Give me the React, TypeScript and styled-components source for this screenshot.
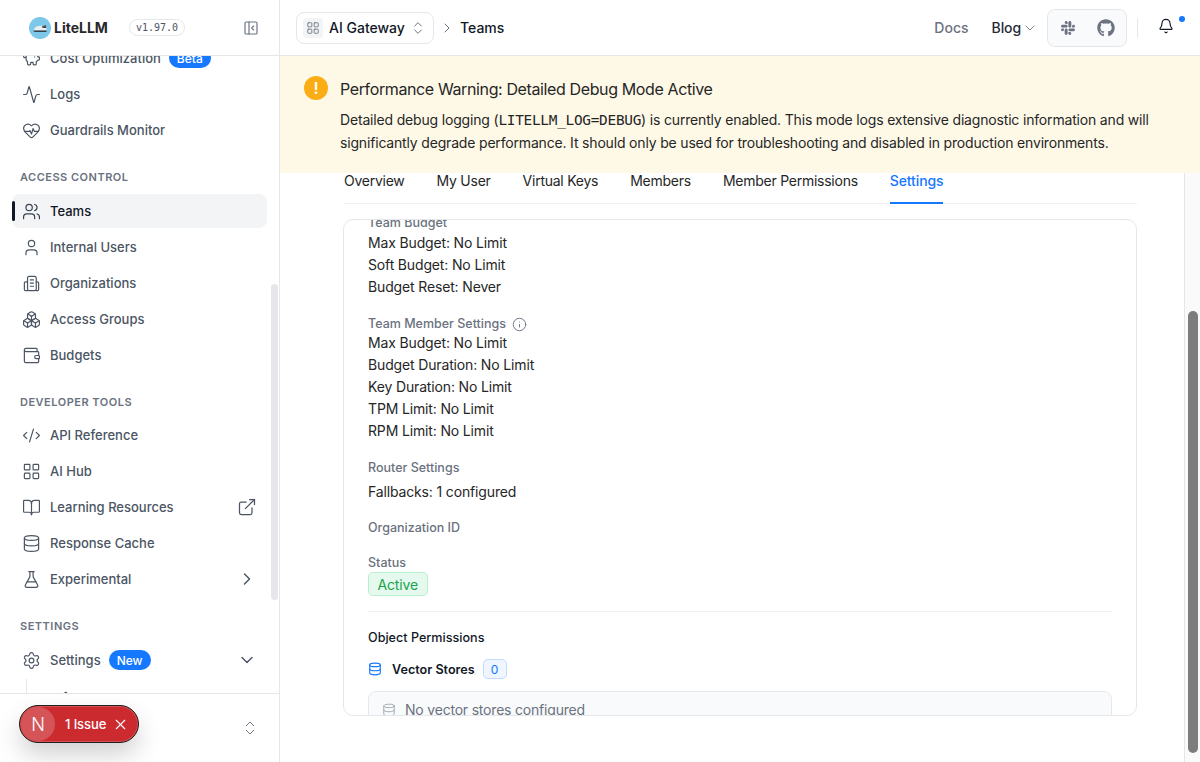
import React from "react";
import styled, { createGlobalStyle } from "styled-components";
import {
  Activity, HeartPulse, Users, User, Boxes, Wallet, CodeXml, LayoutGrid, BookOpen, ExternalLink,
  Database, FlaskConical, ChevronRight, ChevronDown, ChevronsUpDown, Settings, PanelLeftClose, Info, Bell, X, Megaphone, PiggyBank,
} from "lucide-react";
import { FaGithub, FaSlack } from "react-icons/fa";

const Global = createGlobalStyle`
  html, body { margin: 0; padding: 0; height: 100%; overflow: hidden; }
  body { font-family: Inter, "Liberation Sans", sans-serif; color: #111827; background: #fff; -webkit-font-smoothing: antialiased; }
  * { box-sizing: border-box; }
`;

const Shell = styled.div`
  display: flex;
  width: 1200px;
  height: 762px;
  overflow: hidden;
  position: relative;
`;
const Sidebar = styled.aside`
  width: 280px;
  flex: none;
  display: flex;
  flex-direction: column;
  border-right: 1px solid #e5e7eb;
  position: relative;
`;
const SideHead = styled.div`
  height: 56px;
  flex: none;
  display: flex;
  align-items: center;
  padding: 0 20px 0 29px;
  border-bottom: 1px solid #e5e7eb;
`;
const LogoMark = styled.svg`
  width: 22px;
  height: 22px;
  flex: none;
`;
const LogoText = styled.span`
  font-size: 14px;
  font-weight: 700;
  color: #27272a;
  margin-left: 3px;
  width: 75px;
`;
const Version = styled.span`
  font-family: "DejaVu Sans Mono", "Liberation Mono", monospace;
  font-size: 10px;
  color: #4b5563;
  border: 1px solid #e5e7eb;
  border-radius: 9px;
  height: 17px;
  width: 56px;
  display: flex;
  align-items: center;
  justify-content: center;
`;
const Collapse = styled.span`
  margin-left: auto;
  color: #6b7280;
  display: flex;
`;
const NavClip = styled.nav`
  flex: 1;
  overflow: hidden;
  position: relative;
`;
const NavInner = styled.div`
  margin-top: -15px;
  padding: 0 12px;
  display: flex;
  flex-direction: column;
`;
const Row = styled.div<{ $active?: boolean }>`
  height: 34px;
  margin-bottom: 2px;
  flex: none;
  display: flex;
  align-items: center;
  padding: 0 10px 0 9.5px;
  border-radius: 8px;
  font-size: 13px;
  font-weight: 500;
  color: ${(p) => (p.$active ? "#111827" : "#4b5563")};
  background: ${(p) => (p.$active ? "#f3f4f6" : "transparent")};
  position: relative;
  svg.lead { flex: none; margin-right: 9.5px; color: ${(p) => (p.$active ? "#374151" : "#4b5563")}; }
`;
const ActiveBar = styled.span`
  position: absolute;
  left: 0;
  top: 7px;
  width: 3px;
  height: 20px;
  background: #111827;
  border-radius: 2px;
`;
const RowEnd = styled.span`
  margin-left: auto;
  display: flex;
  color: #4b5563;
`;
const Pill = styled.span`
  margin-left: 8px;
  height: 20px;
  padding: 0 8px;
  border-radius: 10px;
  background: #1677ff;
  color: #fff;
  font-size: 12px;
  font-weight: 500;
  display: flex;
  align-items: center;
`;
const SectionLabel = styled.div<{ $mb: number }>`
  height: 16px;
  margin: 20px 0 ${(p) => p.$mb}px 8px;
  font-size: 11px;
  line-height: 16px;
  font-weight: 600;
  letter-spacing: 0.5px;
  color: #6b7280;
`;
const SubTree = styled.div`
  margin-left: 14px;
  border-left: 1px solid #e5e7eb;
  padding: 11px 0 0 24px;
  height: 30px;
  color: #4b5563;
`;
const SideThumb = styled.div`
  position: absolute;
  right: 1px;
  top: 228px;
  width: 7px;
  height: 316px;
  border-radius: 4px;
  background: #e5e7eb;
`;
const SideFoot = styled.div`
  height: 69px;
  flex: none;
  border-top: 1px solid #e5e7eb;
  display: flex;
  align-items: center;
  justify-content: flex-end;
  padding: 0 20px 0 0;
  color: #6b7280;
`;
const Issue = styled.div`
  position: absolute;
  left: 19px;
  top: 705px;
  width: 120px;
  height: 38px;
  border-radius: 19px;
  background: #cb2a2f;
  border: 1px solid #1f1f1f;
  box-shadow: inset 0 0 0 1px rgba(255,255,255,.18), 0 12px 24px rgba(0,0,0,.18);
  display: flex;
  align-items: center;
  color: #fff;
  font-size: 13px;
  font-weight: 500;
  letter-spacing: -0.1px;
`;
const IssueN = styled.span`
  width: 34px;
  height: 34px;
  margin-left: 1px;
  border-radius: 50%;
  background: rgba(255,255,255,.2);
  display: flex;
  align-items: center;
  justify-content: center;
  font-size: 18px;
  font-weight: 300;
  margin-right: 10px;
`;
const IssueX = styled.span`
  display: flex;
  margin-left: 6px;
`;
const Main = styled.main`
  flex: 1;
  min-width: 0;
  display: flex;
  flex-direction: column;
`;
const Top = styled.header`
  height: 56px;
  flex: none;
  border-bottom: 1px solid #e5e7eb;
  display: flex;
  align-items: center;
  padding: 0 16px;
`;
const Switcher = styled.div`
  width: 138px;
  height: 32px;
  border: 1px solid #e5e7eb;
  border-radius: 8px;
  display: flex;
  align-items: center;
  padding: 0 7px 0 6px;
  font-size: 14px;
  font-weight: 500;
  color: #111827;
`;
const SwitchIcon = styled.span`
  width: 20px;
  height: 20px;
  background: #f3f4f6;
  border-radius: 4px;
  display: flex;
  align-items: center;
  justify-content: center;
  color: #6b7280;
  margin-right: 6px;
`;
const SwitchChev = styled.span`
  margin-left: auto;
  display: flex;
  color: #6b7280;
`;
const Crumb = styled.span`
  display: flex;
  color: #6b7280;
  margin: 0 5px;
`;
const CrumbNow = styled.span`
  font-size: 14px;
  font-weight: 500;
  color: #111827;
`;
const TopRight = styled.div`
  margin-left: auto;
  display: flex;
  align-items: center;
`;
const DocsLink = styled.span`
  font-size: 14px;
  font-weight: 500;
  color: #6b7280;
  margin-right: 23px;
`;
const BlogLink = styled.span`
  font-size: 14px;
  font-weight: 500;
  letter-spacing: -0.1px;
  color: #1f2937;
  display: flex;
  align-items: center;
  gap: 1px;
  margin-right: 9px;
  svg { color: #6b7280; }
`;
const Social = styled.div`
  width: 80px;
  height: 38px;
  background: #f9fafb;
  border: 1px solid #e5e7eb;
  border-radius: 8px;
  display: flex;
  align-items: center;
  justify-content: space-between;
  padding: 0 11px 0 12px;
  color: #6b7280;
`;
const Divider = styled.span`
  width: 1px;
  height: 20px;
  background: #e5e7eb;
  margin: 0 20px 0 10px;
`;
const BellWrap = styled.span`
  display: flex;
  position: relative;
  color: #111827;
  margin: -3px 10px 0 0;
`;
const Dot = styled.span`
  position: absolute;
  top: -2px;
  right: -11px;
  width: 6px;
  height: 6px;
  border-radius: 50%;
  background: #1677ff;
`;
const Banner = styled.section`
  height: 117px;
  flex: none;
  background: #fef9e7;
  padding: 20px 24px 0;
  display: grid;
  grid-template-columns: 24px 1fr;
  align-content: start;
  column-gap: 12px;
`;
const WarnIcon = styled.span`
  width: 24px;
  height: 24px;
  border-radius: 50%;
  background: #faad14;
  color: #fff;
  font-size: 16px;
  font-weight: 600;
  display: flex;
  align-items: center;
  justify-content: center;
`;
const BannerTitle = styled.div`
  font-size: 16px;
  line-height: 26px;
  letter-spacing: -0.38px;
  color: #262626;
  margin-bottom: 7px;
`;
const BannerBody = styled.div`
  font-size: 14px;
  line-height: 22.6px;
  letter-spacing: -0.175px;
  color: #262626;
  grid-column: 2;
  code { font-family: "DejaVu Sans Mono", "Liberation Mono", monospace; font-size: 14.4px; letter-spacing: -0.27px; }
`;
const ScrollRow = styled.div`
  flex: 1;
  min-height: 0;
  display: flex;
`;
const Content = styled.div`
  flex: 1;
  padding: 0 47px 0 64px;
  min-width: 0;
  overflow: hidden;
`;
const Tabs = styled.div`
  display: flex;
  gap: 32px;
  height: 31px;
  border-bottom: 1px solid #f0f0f0;
  font-size: 14px;
  line-height: 16px;
  letter-spacing: -0.25px;
  color: #262626;
  margin-bottom: 15px;
`;
const Tab = styled.span<{ $on?: boolean }>`
  height: 31px;
  font-weight: ${(p) => (p.$on ? 500 : 400)};
  letter-spacing: ${(p) => (p.$on ? "-0.12px" : "inherit")};
  color: ${(p) => (p.$on ? "#1677ff" : "#262626")};
  border-bottom: 2px solid ${(p) => (p.$on ? "#1677ff" : "transparent")};
`;
const Card = styled.div`
  height: 497px;
  margin: 0 0 0 -1px;
  border: 1px solid #e5e7eb;
  border-radius: 10px;
  padding: 0 24px;
  overflow: hidden;
`;
const Clip = styled.div`
  margin-top: -5px;
`;
const Label = styled.div<{ $mt?: number; $mb?: number }>`
  font-size: 12.5px;
  line-height: 16px;
  font-weight: 500;
  color: #6b7280;
  margin-top: ${(p) => p.$mt ?? 0}px;
  margin-bottom: ${(p) => p.$mb ?? 1}px;
  display: flex;
  align-items: center;
  gap: 6px;
`;
const Line = styled.div`
  font-size: 14px;
  line-height: 22px;
  letter-spacing: -0.15px;
  color: #262626;
`;
const StatusTag = styled.span`
  display: flex;
  width: fit-content;
  align-items: center;
  height: 24px;
  padding: 0 8.5px;
  background: #e6f9ee;
  border: 1px solid #b7eecb;
  border-radius: 5px;
  color: #16a34a;
  font-size: 14px;
  letter-spacing: -0.15px;
`;
const Rule = styled.div`
  height: 1px;
  background: #f0f0f0;
  margin: 15px 0 18px;
`;
const PermTitle = styled.div`
  font-size: 12.6px;
  line-height: 16px;
  font-weight: 500;
  color: #111827;
  margin-bottom: 13px;
`;
const StoreHead = styled.div`
  display: flex;
  align-items: center;
  font-size: 12.6px;
  font-weight: 600;
  color: #111827;
  height: 20px;
  margin-bottom: 12px;
  svg { color: #1677ff; margin-right: 10px; }
`;
const CountChip = styled.span`
  margin-left: 8px;
  width: 24px;
  height: 20px;
  border: 1px solid #bfdbfe;
  background: #eff6ff;
  border-radius: 5px;
  color: #1677ff;
  font-size: 12px;
  font-weight: 400;
  display: flex;
  align-items: center;
  justify-content: center;
`;
const Empty = styled.div`
  height: 60px;
  background: #f9fafb;
  border: 1px solid #e5e7eb;
  border-radius: 8px;
  padding: 9px 13px;
  display: flex;
  align-items: flex-start;
  gap: 9px;
  font-size: 14px;
  line-height: 18px;
  letter-spacing: -0.2px;
  color: #6b7280;
  svg { color: #9ca3af; margin-top: 2px; }
`;
const Track = styled.div`
  width: 16px;
  flex: none;
  position: relative;
  background: #fafafa;
  border-left: 1px solid #e5e5e5;
`;
const Thumb = styled.div`
  position: absolute;
  left: 3px;
  top: 138px;
  width: 10px;
  height: 442px;
  border-radius: 5px;
  background: #7d7d7d;
`;

const IC = { size: 19, strokeWidth: 1.5, className: "lead" };

function Logo() {
  return (
    <LogoMark viewBox="0 0 22 22">
      <circle cx="11" cy="11" r="11" fill="#7cc8ea" />
      <path d="M4 13.5 L7 9.5 L17 8 L17.5 13.5 Z" fill="#e8eef2" />
      <path d="M4 13.5 H17.5 V15 H5.5 Z" fill="#3b3f46" />
      <path d="M13 9 L17 8 L17.3 11 L13.5 11 Z" fill="#4a4f57" />
    </LogoMark>
  );
}

function OrgIcon() {
  return (
    <svg className="lead" width="19" height="19" viewBox="0 0 24 24" fill="none" stroke="currentColor" strokeWidth="1.5" strokeLinecap="round" strokeLinejoin="round">
      <rect x="7" y="3" width="11" height="18" rx="2" />
      <path d="M7 10H4.5A1.5 1.5 0 0 0 3 11.5V19.5A1.5 1.5 0 0 0 4.5 21H7" />
      <path d="M18 10H19.5A1.5 1.5 0 0 1 21 11.5V19.5A1.5 1.5 0 0 1 19.5 21H18" />
      <path d="M10.5 7.5h4M10.5 11.5h4M10.5 15.5h4" />
    </svg>
  );
}

export default function App() {
  return (
    <>
      <Global />
      <Shell>
        <Sidebar>
          <SideHead>
            <Logo />
            <LogoText>LiteLLM</LogoText>
            <Version>v1.97.0</Version>
            <Collapse><PanelLeftClose size={16} strokeWidth={1.75} /></Collapse>
          </SideHead>
          <NavClip>
            <NavInner>
              <Row><PiggyBank {...IC} />Cost Optimization<Pill>Beta</Pill></Row>
              <Row><Activity {...IC} />Logs</Row>
              <Row><HeartPulse {...IC} />Guardrails Monitor</Row>
              <SectionLabel $mb={9}>ACCESS CONTROL</SectionLabel>
              <Row $active><ActiveBar /><Users {...IC} />Teams</Row>
              <Row><User {...IC} />Internal Users</Row>
              <Row><OrgIcon />Organizations</Row>
              <Row><Boxes {...IC} />Access Groups</Row>
              <Row><Wallet {...IC} />Budgets</Row>
              <SectionLabel $mb={8}>DEVELOPER TOOLS</SectionLabel>
              <Row><CodeXml {...IC} />API Reference</Row>
              <Row><LayoutGrid {...IC} />AI Hub</Row>
              <Row><BookOpen {...IC} />Learning Resources<RowEnd><ExternalLink size={20} strokeWidth={1.5} /></RowEnd></Row>
              <Row><Database {...IC} />Response Cache</Row>
              <Row><FlaskConical {...IC} />Experimental<RowEnd><ChevronRight size={20} strokeWidth={1.75} /></RowEnd></Row>
              <SectionLabel $mb={9}>SETTINGS</SectionLabel>
              <Row><Settings {...IC} />Settings<Pill>New</Pill><RowEnd><ChevronDown size={20} strokeWidth={1.75} /></RowEnd></Row>
              <SubTree><Megaphone size={18} strokeWidth={1.5} /></SubTree>
            </NavInner>
            <SideThumb />
          </NavClip>
          <SideFoot><ChevronsUpDown size={18} strokeWidth={1.25} /></SideFoot>
        </Sidebar>
        <Issue>
          <IssueN>N</IssueN>1 Issue<IssueX><X size={17} strokeWidth={1.5} /></IssueX>
        </Issue>
        <Main>
          <Top>
            <Switcher>
              <SwitchIcon><LayoutGrid size={14} strokeWidth={1.5} /></SwitchIcon>
              AI Gateway
              <SwitchChev><ChevronsUpDown size={16} strokeWidth={1.5} /></SwitchChev>
            </Switcher>
            <Crumb><ChevronRight size={16} strokeWidth={1.5} /></Crumb>
            <CrumbNow>Teams</CrumbNow>
            <TopRight>
              <DocsLink>Docs</DocsLink>
              <BlogLink>Blog <ChevronDown size={16} strokeWidth={1.25} /></BlogLink>
              <Social><FaSlack size={16} /><FaGithub size={18} /></Social>
              <Divider />
              <BellWrap><Bell size={16} strokeWidth={1.75} /><Dot /></BellWrap>
            </TopRight>
          </Top>
          <Banner>
            <WarnIcon>!</WarnIcon>
            <BannerTitle>Performance Warning: Detailed Debug Mode Active</BannerTitle>
            <BannerBody>
              Detailed debug logging (<code>LITELLM_LOG=DEBUG</code>) is currently enabled. This mode logs extensive diagnostic information and will significantly degrade performance. It should only be used for troubleshooting and disabled in production environments.
            </BannerBody>
          </Banner>
          <ScrollRow>
            <Content>
              <Tabs>
                <Tab>Overview</Tab>
                <Tab>My User</Tab>
                <Tab>Virtual Keys</Tab>
                <Tab>Members</Tab>
                <Tab>Member Permissions</Tab>
                <Tab $on>Settings</Tab>
              </Tabs>
              <Card>
                <Clip>
                  <Label>Team Budget</Label>
                  <Line>Max Budget: No Limit</Line>
                  <Line>Soft Budget: No Limit</Line>
                  <Line>Budget Reset: Never</Line>
                  <Label $mt={18} $mb={0}>Team Member Settings <Info size={15} strokeWidth={1.5} /></Label>
                  <Line>Max Budget: No Limit</Line>
                  <Line>Budget Duration: No Limit</Line>
                  <Line>Key Duration: No Limit</Line>
                  <Line>TPM Limit: No Limit</Line>
                  <Line>RPM Limit: No Limit</Line>
                  <Label $mt={18} $mb={5}>Router Settings</Label>
                  <Line>Fallbacks: 1 configured</Line>
                  <Label $mt={17}>Organization ID</Label>
                  <Label $mt={19} $mb={1}>Status</Label>
                  <StatusTag>Active</StatusTag>
                  <Rule />
                  <PermTitle>Object Permissions</PermTitle>
                  <StoreHead><Database size={14} strokeWidth={2} />Vector Stores<CountChip>0</CountChip></StoreHead>
                  <Empty><Database size={14} strokeWidth={1.5} />No vector stores configured</Empty>
                </Clip>
              </Card>
            </Content>
            <Track><Thumb /></Track>
          </ScrollRow>
        </Main>
      </Shell>
    </>
  );
}
